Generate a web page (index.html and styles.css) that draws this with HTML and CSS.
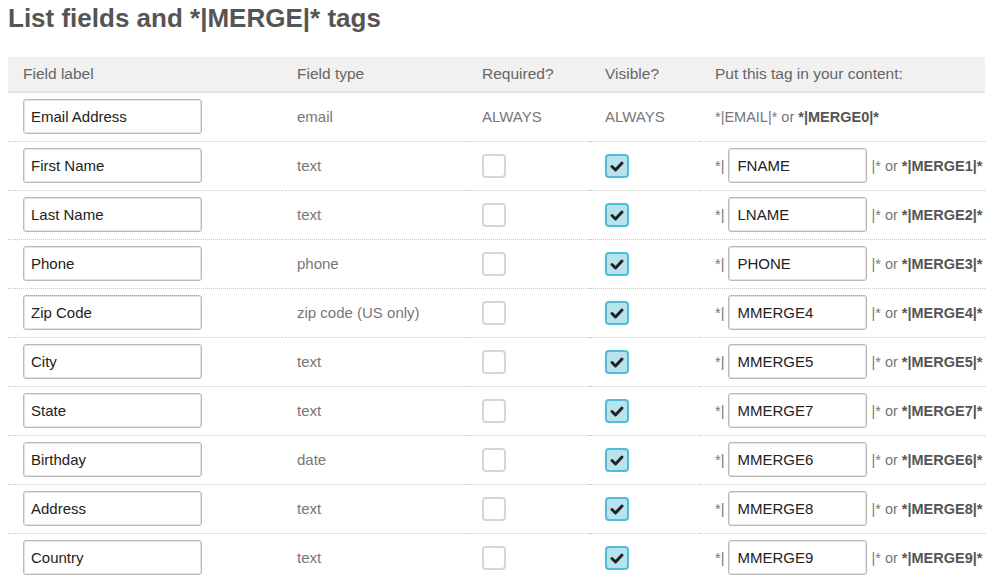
FILE: index.html
```html
<!DOCTYPE html>
<html>
<head>
    <title>List fields</title>
    <link rel="stylesheet" href="styles.css">
</head>
<body>
    <h2 class="page-title">List fields and *|MERGE|* tags</h2>

    <table class="fields">
        <thead>
            <tr>
                <th class="col-label">Field label</th>
                <th class="col-type">Field type</th>
                <th class="col-req">Required?</th>
                <th class="col-vis">Visible?</th>
                <th class="col-tag">Put this tag in your content:</th>
            </tr>
        </thead>
        <tbody>
            <tr>
                <td><input class="field-input" type="text" value="Email Address"></td>
                <td>email</td>
                <td>ALWAYS</td>
                <td>ALWAYS</td>
                <td><span class="tag">*|EMAIL|* or <b>*|MERGE0|*</b></span></td>
            </tr>
            <tr>
                <td><input class="field-input" type="text" value="First Name"></td>
                <td>text</td>
                <td><span class="box"></span></td>
                <td><span class="box checked"><svg viewBox="0 0 20 20"><polyline points="5,10.5 8.5,14 15,7"/></svg></span></td>
                <td><span class="tag">*| <input class="tag-input" type="text" value="FNAME"> |* or <b>*|MERGE1|*</b></span></td>
            </tr>
            <tr>
                <td><input class="field-input" type="text" value="Last Name"></td>
                <td>text</td>
                <td><span class="box"></span></td>
                <td><span class="box checked"><svg viewBox="0 0 20 20"><polyline points="5,10.5 8.5,14 15,7"/></svg></span></td>
                <td><span class="tag">*| <input class="tag-input" type="text" value="LNAME"> |* or <b>*|MERGE2|*</b></span></td>
            </tr>
            <tr>
                <td><input class="field-input" type="text" value="Phone"></td>
                <td>phone</td>
                <td><span class="box"></span></td>
                <td><span class="box checked"><svg viewBox="0 0 20 20"><polyline points="5,10.5 8.5,14 15,7"/></svg></span></td>
                <td><span class="tag">*| <input class="tag-input" type="text" value="PHONE"> |* or <b>*|MERGE3|*</b></span></td>
            </tr>
            <tr>
                <td><input class="field-input" type="text" value="Zip Code"></td>
                <td>zip code (US only)</td>
                <td><span class="box"></span></td>
                <td><span class="box checked"><svg viewBox="0 0 20 20"><polyline points="5,10.5 8.5,14 15,7"/></svg></span></td>
                <td><span class="tag">*| <input class="tag-input" type="text" value="MMERGE4"> |* or <b>*|MERGE4|*</b></span></td>
            </tr>
            <tr>
                <td><input class="field-input" type="text" value="City"></td>
                <td>text</td>
                <td><span class="box"></span></td>
                <td><span class="box checked"><svg viewBox="0 0 20 20"><polyline points="5,10.5 8.5,14 15,7"/></svg></span></td>
                <td><span class="tag">*| <input class="tag-input" type="text" value="MMERGE5"> |* or <b>*|MERGE5|*</b></span></td>
            </tr>
            <tr>
                <td><input class="field-input" type="text" value="State"></td>
                <td>text</td>
                <td><span class="box"></span></td>
                <td><span class="box checked"><svg viewBox="0 0 20 20"><polyline points="5,10.5 8.5,14 15,7"/></svg></span></td>
                <td><span class="tag">*| <input class="tag-input" type="text" value="MMERGE7"> |* or <b>*|MERGE7|*</b></span></td>
            </tr>
            <tr>
                <td><input class="field-input" type="text" value="Birthday"></td>
                <td>date</td>
                <td><span class="box"></span></td>
                <td><span class="box checked"><svg viewBox="0 0 20 20"><polyline points="5,10.5 8.5,14 15,7"/></svg></span></td>
                <td><span class="tag">*| <input class="tag-input" type="text" value="MMERGE6"> |* or <b>*|MERGE6|*</b></span></td>
            </tr>
            <tr>
                <td><input class="field-input" type="text" value="Address"></td>
                <td>text</td>
                <td><span class="box"></span></td>
                <td><span class="box checked"><svg viewBox="0 0 20 20"><polyline points="5,10.5 8.5,14 15,7"/></svg></span></td>
                <td><span class="tag">*| <input class="tag-input" type="text" value="MMERGE8"> |* or <b>*|MERGE8|*</b></span></td>
            </tr>
            <tr>
                <td><input class="field-input" type="text" value="Country"></td>
                <td>text</td>
                <td><span class="box"></span></td>
                <td><span class="box checked"><svg viewBox="0 0 20 20"><polyline points="5,10.5 8.5,14 15,7"/></svg></span></td>
                <td><span class="tag">*| <input class="tag-input" type="text" value="MMERGE9"> |* or <b>*|MERGE9|*</b></span></td>
            </tr>
        </tbody>
    </table>
</body>
</html>
```

FILE: styles.css
```css
body {
    font-family: "Liberation Sans", Arial, sans-serif;
    background-color: #fff;
    margin: 0;
    padding: 0 0 0 8px;
    color: #777;
}

.page-title {
    font-size: 26px;
    font-weight: bold;
    color: #555;
    margin: 0;
    padding-top: 3px;
    height: 54px;
    line-height: 30px;
}

table.fields {
    border-collapse: collapse;
    table-layout: fixed;
    width: 977px;
    font-size: 15px;
}

table.fields th,
table.fields td {
    box-sizing: border-box;
}

.col-label { width: 274px; }
.col-type { width: 185px; }
.col-req { width: 123px; }
.col-vis { width: 110px; }
.col-tag { width: 285px; }

thead th {
    background-color: #f1f1f1;
    color: #666;
    font-size: 15.5px;
    font-weight: normal;
    text-align: left;
    height: 35px;
    padding: 0 0 0 15px;
    border-bottom: 2px solid #e2e2e2;
}

tbody td {
    height: 49px;
    padding: 0 0 0 15px;
    border-bottom: 1px dotted #c8c8c8;
    vertical-align: middle;
    white-space: nowrap;
}

b {
    color: #555;
}

.field-input {
    width: 179px;
    height: 35px;
    box-sizing: border-box;
    border: 1px solid #b9b9b9;
    border-radius: 3px;
    box-shadow: inset 0 0 0 1px #e4e4e4;
    font-family: "Liberation Sans", Arial, sans-serif;
    font-size: 15px;
    color: #222;
    padding: 0 7px;
    margin: 0;
    display: block;
}

.box {
    display: block;
    width: 24px;
    height: 24px;
    box-sizing: border-box;
    border: 2px solid #d6d6d6;
    border-radius: 4px;
    background-color: #fff;
}

.box.checked {
    border-color: #52bcd6;
    background-color: #b7e3ee;
}

.box svg {
    display: block;
    width: 20px;
    height: 20px;
    fill: none;
    stroke: #222;
    stroke-width: 3;
    stroke-linecap: round;
    stroke-linejoin: round;
}

.tag {
    display: flex;
    align-items: center;
    white-space: pre;
    font-size: 14.5px;
}

.tag-input {
    width: 139px;
    height: 35px;
    box-sizing: border-box;
    border: 1px solid #b9b9b9;
    border-radius: 3px;
    box-shadow: inset 0 0 0 1px #e4e4e4;
    font-family: "Liberation Sans", Arial, sans-serif;
    font-size: 15px;
    color: #222;
    padding: 0 8px;
    margin: 0;
}
```
